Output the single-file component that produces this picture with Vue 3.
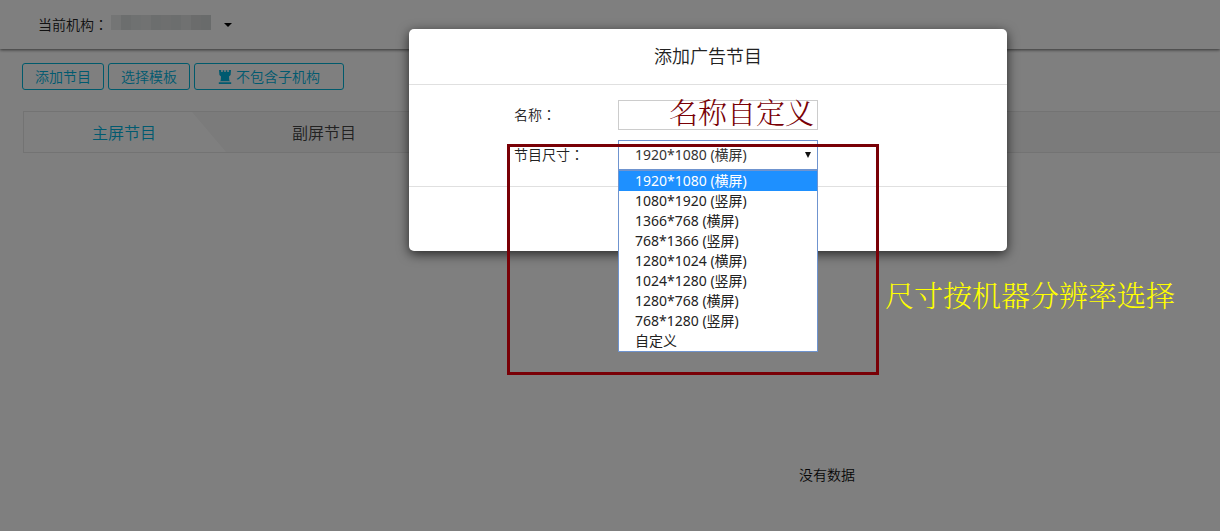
<script setup>
import { ref } from 'vue'

const sizes = [
  '1920*1080 (横屏)',
  '1080*1920 (竖屏)',
  '1366*768 (横屏)',
  '768*1366 (竖屏)',
  '1280*1024 (横屏)',
  '1024*1280 (竖屏)',
  '1280*768 (横屏)',
  '768*1280 (竖屏)',
  '自定义',
]
const size = ref(sizes[0])
const name = ref('')
const mosaic = ['#e8eaea', '#d9dcdc', '#dfe2e2', '#e3e5e5', '#d9dcdc', '#dcdfdf', '#d9dcdc', '#e0e2e2', '#d6d9d9', '#d3d6d6']
</script>

<template>
  <div class="page">
    <header class="topbar">
      <span>当前机构<span class="colon">：</span></span>
      <span class="mosaic">
        <i v-for="(c, i) in mosaic" :key="i" :style="{ background: c }"></i>
      </span>
      <button class="caret" type="button" aria-label="切换机构"></button>
    </header>

    <main class="content">
      <div class="toolbar">
        <button type="button" class="btn">添加节目</button>
        <button type="button" class="btn">选择模板</button>
        <button type="button" class="btn wide">
          <svg width="14" height="14" viewBox="0 0 14 14" aria-hidden="true">
            <path fill="currentColor" d="M1 0h2.200v2h1.500V.3h1.600v1.700h1.400V.3h1.600v1.700h1.500V0H13l-.4 5L11 6.500l.3 4 1 .8H1.700l1-.8.3-4L1.400 5zM.8 12.300h12.400V14H.8z" />
          </svg>
          不包含子机构
        </button>
      </div>
      <nav class="tabs">
        <a href="#main" class="tab active">主屏节目</a>
        <a href="#sub" class="tab">副屏节目</a>
      </nav>
      <p class="empty">没有数据</p>
    </main>

    <div class="mask">
      <section class="dialog" role="dialog" aria-labelledby="dialog-title">
        <h1 id="dialog-title">添加广告节目</h1>
        <form class="form" @submit.prevent>
          <div class="row">
            <label for="name">名称<span class="colon">：</span></label>
            <div class="field">
              <input id="name" v-model="name" type="text" />
              <span class="note red">名称自定义</span>
            </div>
          </div>
          <div class="row">
            <label for="size">节目尺寸<span class="colon">：</span></label>
            <div class="field">
              <select id="size" v-model="size">
                <option v-for="s in sizes" :key="s">{{ s }}</option>
              </select>
              <span class="arrow"></span>
              <ul class="menu">
                <li v-for="s in sizes" :key="s" :class="{ on: s === size }">{{ s }}</li>
              </ul>
            </div>
          </div>
        </form>
        <footer class="foot"></footer>
        <div class="frame">
          <span class="note yellow">尺寸按机器分辨率选择</span>
        </div>
      </section>
    </div>
  </div>
</template>

<style>
body {
  margin: 0;
  background: #fff;
}
</style>

<style scoped>
.page {
  position: relative;
  min-height: 100vh;
  overflow: hidden;
  font: 350 14px/20px "Noto Sans", "Noto Sans CJK SC", sans-serif;
  color: #222;
}
.page * {
  box-sizing: border-box;
}
button,
input,
select {
  font: inherit;
}
.colon {
  font-family: "Noto Sans CJK TC", sans-serif;
  line-height: 1;
}
.topbar {
  display: flex;
  align-items: center;
  height: 49px;
  padding-left: 38px;
  box-shadow: 0 1px 3px rgba(0, 0, 0, 0.6);
}
.mosaic {
  display: flex;
  width: 100px;
  height: 15px;
  margin-left: 3px;
  margin-bottom: 4px;
}
.mosaic i {
  flex: 1;
}
.caret {
  width: 8px;
  height: 4px;
  margin-left: 13px;
  padding: 0;
  border: 4px solid transparent;
  border-top-color: #000;
  border-bottom: 0;
  background: none;
}
.content {
  padding: 14px 0 0 22px;
}
.toolbar {
  display: flex;
  gap: 4px;
}
.btn {
  display: flex;
  align-items: center;
  justify-content: center;
  gap: 4px;
  width: 82px;
  height: 27px;
  padding: 0;
  border: 1px solid #00b4d8;
  border-radius: 3px;
  background: #fff;
  color: #00b4e0;
}
.wide {
  width: 150px;
}
.tabs {
  display: flex;
  height: 42px;
  margin: 21px 0 0 1px;
  border: 1px solid #e6e6e6;
  border-right: 0;
  background: #f6f6f6;
}
.tab {
  position: relative;
  width: 200px;
  font-size: 16px;
  line-height: 42px;
  text-align: center;
  text-decoration: none;
  color: #444;
}
.tab.active {
  color: #00b4e0;
  z-index: 0;
}
.tab.active::before {
  content: "";
  position: absolute;
  z-index: -1;
  inset: 0 -2px 0 0;
  background: #fff;
  clip-path: polygon(0 0, 168px 0, 100% 100%, 0 100%);
}
.empty {
  margin: 312px 0 0 777px;
  color: #111;
}
.mask {
  position: absolute;
  inset: 0;
  display: flex;
  align-items: flex-start;
  justify-content: center;
  padding: 29px 0 0 196px;
  background: rgba(0, 0, 0, 0.5);
}
.dialog {
  position: relative;
  width: 598px;
  border-radius: 5px;
  background: #fff;
  box-shadow: 0 3px 12px rgba(0, 0, 0, 0.7);
}
h1 {
  margin: 0;
  border-bottom: 1px solid #e0e0e0;
  font-size: 18px;
  line-height: 55px;
  font-weight: 350;
  text-align: center;
}
.form {
  display: flex;
  flex-direction: column;
  gap: 10px;
  padding: 15px 0 16px 105px;
  border-bottom: 1px solid #e0e0e0;
}
.row {
  display: flex;
  align-items: center;
}
label {
  width: 104px;
}
.field {
  position: relative;
  width: 200px;
  height: 30px;
}
input,
select {
  display: block;
  width: 100%;
  height: 30px;
  border: 1px solid #ccc;
  border-radius: 0;
  background: #fff;
  color: #333;
}
select {
  appearance: none;
  padding: 0 16px;
  border-color: #6f94cf;
  outline: 0;
  font-weight: 400;
}
.arrow {
  position: absolute;
  top: 12px;
  right: 7px;
  border: 3px solid transparent;
  border-top: 6px solid #111;
  border-bottom: 0;
}
.menu {
  position: absolute;
  z-index: 1;
  top: 30px;
  left: 0;
  right: 0;
  margin: 0;
  padding: 0;
  border: 1px solid #6f94cf;
  background: #fff;
  list-style: none;
  font-weight: 400;
}
.menu li {
  height: 20px;
  padding-left: 16px;
}
.menu .on {
  background: #1e90ff;
  color: #fff;
}
.foot {
  height: 64px;
}
.note {
  position: absolute;
  font: 300 29px/36px SimSun, "Noto Serif CJK SC", "Noto Sans CJK SC", serif;
  white-space: nowrap;
}
.red {
  top: -6px;
  right: 4px;
  color: #790006;
}
.frame {
  position: absolute;
  z-index: 2;
  top: 115px;
  left: 98px;
  width: 372px;
  height: 231px;
  border: 3px solid #790006;
  pointer-events: none;
}
.yellow {
  top: 130px;
  left: 375px;
  color: #ff0;
}
</style>
